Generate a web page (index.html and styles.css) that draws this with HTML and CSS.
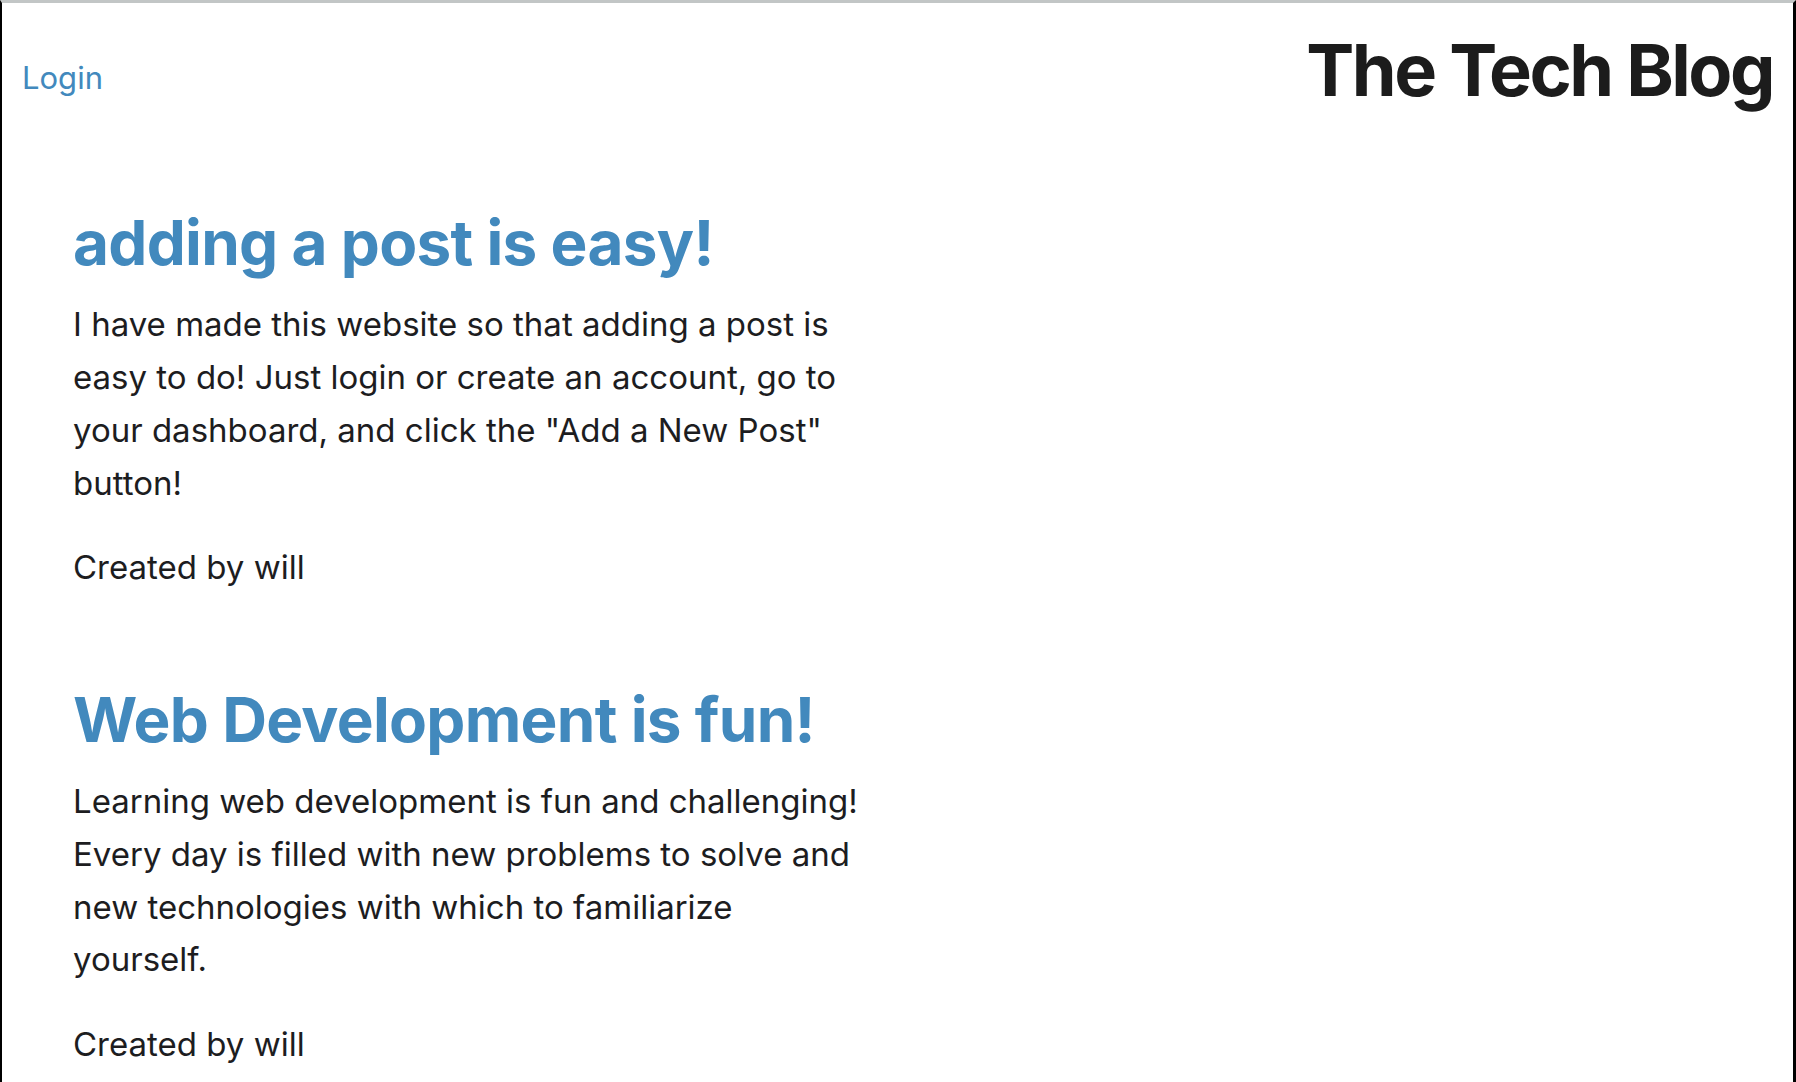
FILE: index.html
```html
<!DOCTYPE html>
<html lang="en">
<head>
<meta charset="utf-8">
<title>The Tech Blog</title>
<link rel="stylesheet" href="styles.css">
</head>
<body>
<div class="frame">
  <header class="site-header">
    <a class="login" href="#">Login</a>
    <h1 class="site-title">The Tech Blog</h1>
  </header>
  <main class="posts">
    <article class="post">
      <h2 class="post-title">adding a post is easy!</h2>
      <p class="post-body">I have made this website so that adding a post is easy to do! Just login or create an account, go to your dashboard, and click the "Add a New Post" button!</p>
      <p class="post-author">Created by will</p>
    </article>
    <article class="post">
      <h2 class="post-title">Web Development is fun!</h2>
      <p class="post-body">Learning web development is fun and challenging! Every day is filled with new problems to solve and new technologies with which to familiarize yourself.</p>
      <p class="post-author">Created by will</p>
    </article>
  </main>
</div>
</body>
</html>
```

FILE: styles.css
```css
html, body {
  margin: 0;
  padding: 0;
  background: #ffffff;
}

body {
  font-family: Inter, "Noto Sans", "Liberation Sans", sans-serif;
  color: #1d1d1f;
  overflow: hidden;
}

.frame {
  box-sizing: border-box;
  min-height: 1082px;
  border-top: 3px solid #c2c6c6;
  border-left: 2px solid #000;
  border-right: 3px solid #000;
}

.site-header {
  display: flex;
  justify-content: space-between;
  align-items: flex-start;
  padding: 0 20px 0 20px;
}

.login {
  margin-top: 56px;
  font-size: 31px;
  line-height: normal;
  color: #4289bd;
  text-decoration: none;
}

.site-title {
  margin: 23px 0 0 0;
  font-size: 72px;
  font-weight: 700;
  line-height: normal;
  letter-spacing: -2.5px;
  color: #1c1c1c;
}

.posts {
  padding: 0 0 0 71px;
}

.post {
  width: 790px;
}

.post-title {
  margin: 0;
  font-size: 62px;
  font-weight: 700;
  line-height: 1.2;
  letter-spacing: -0.7px;
  color: #4289bd;
  white-space: nowrap;
}

.post-body {
  margin: 18px 0 0 0;
  font-size: 33px;
  line-height: 52.7px;
}

.post-author {
  margin: 32px 0 0 0;
  font-size: 33px;
  line-height: 52.7px;
}

.post:first-child {
  margin-top: 93px;
}

.post + .post {
  margin-top: 89px;
}
```
